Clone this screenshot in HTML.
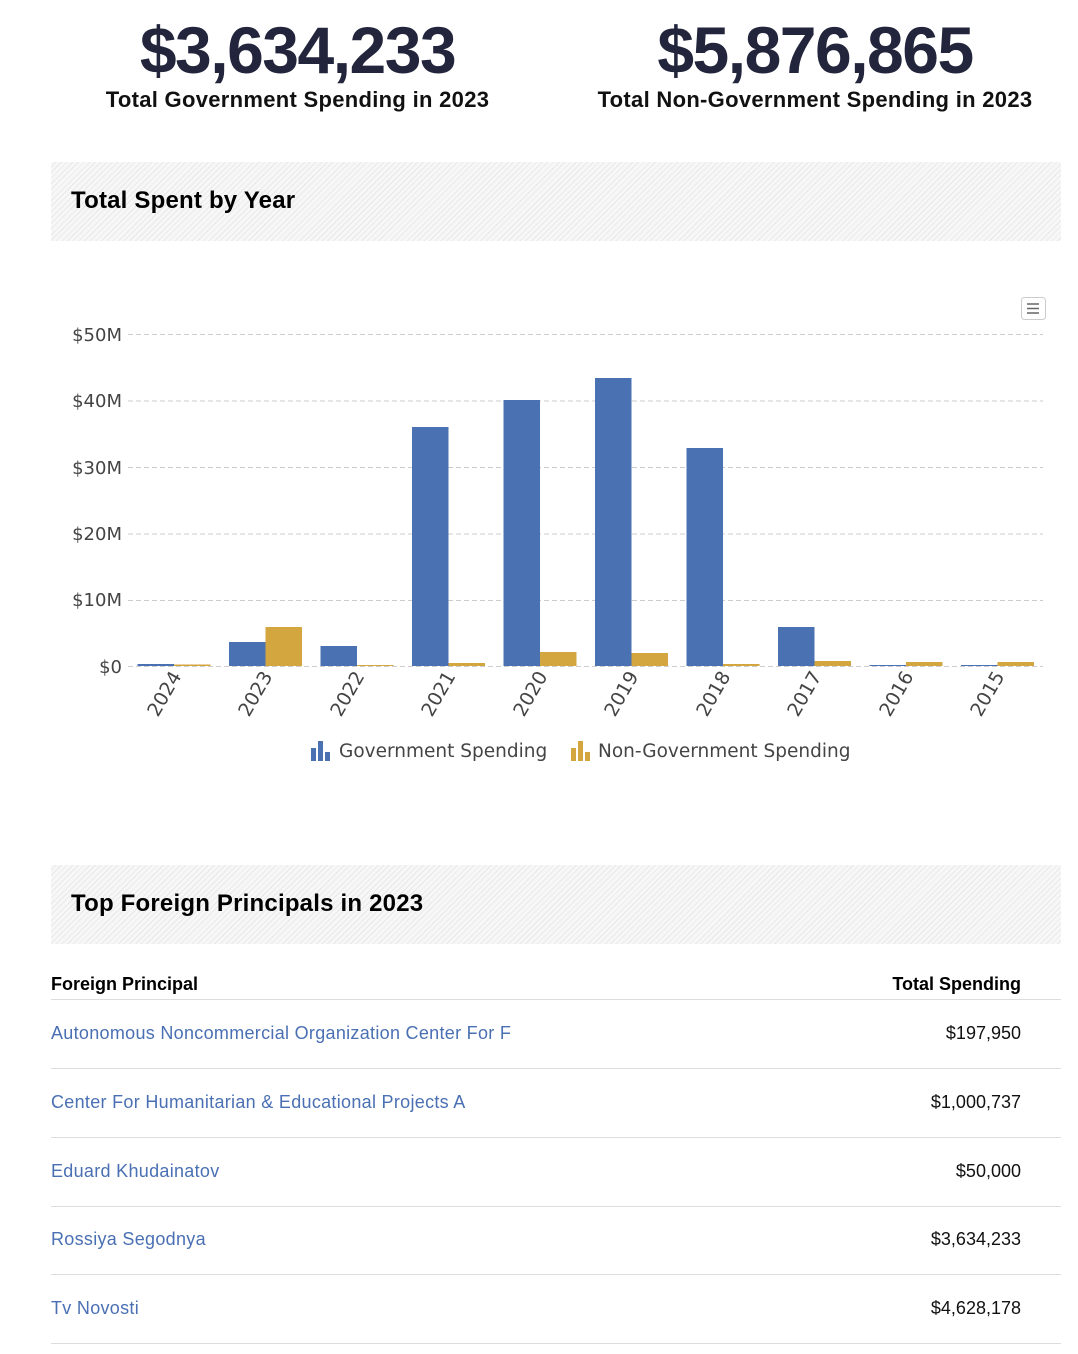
<!DOCTYPE html>
<html><head><meta charset="utf-8"><style>
body{margin:0;width:1078px;height:1354px;background:#fff;font-family:"Liberation Sans",sans-serif;position:relative;overflow:hidden}
.a{position:absolute}
.big{font-weight:bold;font-size:66px;color:#22253b;text-align:center;letter-spacing:-1.5px}
.sub{font-weight:bold;font-size:22px;color:#111;text-align:center;letter-spacing:0.3px}
.hatch{position:absolute;left:51px;width:1010px;height:79px;background:repeating-linear-gradient(135deg,#f7f7f7 0 3px,#e9e9e9 3px 4px)}
.hatch h2{margin:0;position:absolute;left:20px;top:25px;font-size:24px;font-weight:bold;color:#000;letter-spacing:0.2px}
.row{position:absolute;left:51px;width:1010px;height:68px;border-bottom:1px solid #ddd}
.row span{position:absolute;top:23px;font-size:18px}
.row .n{left:0;color:#4a70b3;letter-spacing:0.3px}
.row .v{right:40px;color:#111}
</style></head><body>
<div class="a big" style="left:50px;width:495px;top:12px">$3,634,233</div>
<div class="a sub" style="left:50px;width:495px;top:87px">Total Government Spending in 2023</div>
<div class="a big" style="left:570px;width:490px;top:12px">$5,876,865</div>
<div class="a sub" style="left:570px;width:490px;top:87px">Total Non-Government Spending in 2023</div>

<div class="hatch" style="top:162px"><h2>Total Spent by Year</h2></div>

<svg class="a" style="left:0;top:0" width="1078" height="800" font-family="DejaVu Sans, sans-serif">
<rect x="1021.5" y="297.5" width="24" height="22" rx="3" fill="#fff" stroke="#ccc"/>
<path d="M1027 304h12M1027 308.5h12M1027 313h12" stroke="#666" stroke-width="1.5"/>
<g stroke="#ccc" stroke-dasharray="5,3" stroke-width="1">
<path d="M128 334.5H1043M128 401H1043M128 467.5H1043M128 534H1043M128 600.5H1043M128 666.5H1043"/>
</g>
<g fill="#444" font-size="18" text-anchor="end">
<text x="122" y="341">$50M</text><text x="122" y="407">$40M</text><text x="122" y="474">$30M</text><text x="122" y="540">$20M</text><text x="122" y="606">$10M</text><text x="122" y="673">$0</text>
</g>
<g fill="#4a72b2">
<rect x="137.5" y="664" width="36.5" height="2"/>
<rect x="229" y="642" width="36.5" height="24"/>
<rect x="320.5" y="646" width="36.5" height="20"/>
<rect x="412" y="427" width="36.5" height="239"/>
<rect x="503.5" y="400" width="36.5" height="266"/>
<rect x="595" y="378" width="36.5" height="288"/>
<rect x="686.5" y="448" width="36.5" height="218"/>
<rect x="778" y="627" width="36.5" height="39"/>
<rect x="869.5" y="665" width="36.5" height="1"/>
<rect x="961" y="665" width="36.5" height="1"/>
</g>
<g fill="#d4a640">
<rect x="174" y="664.5" width="36.5" height="1.5"/>
<rect x="265.5" y="627" width="36.5" height="39"/>
<rect x="357" y="665" width="36.5" height="1"/>
<rect x="448.5" y="663" width="36.5" height="3"/>
<rect x="540" y="652" width="36.5" height="14"/>
<rect x="631.5" y="653" width="36.5" height="13"/>
<rect x="723" y="664" width="36.5" height="2"/>
<rect x="814.5" y="661" width="36.5" height="5"/>
<rect x="906" y="662" width="36.5" height="4"/>
<rect x="997.5" y="662" width="36.5" height="4"/>
</g>
<g fill="#444" font-size="19" text-anchor="end">
<text transform="translate(182,676) rotate(-60)">2024</text>
<text transform="translate(273,676) rotate(-60)">2023</text>
<text transform="translate(365,676) rotate(-60)">2022</text>
<text transform="translate(456,676) rotate(-60)">2021</text>
<text transform="translate(548,676) rotate(-60)">2020</text>
<text transform="translate(639,676) rotate(-60)">2019</text>
<text transform="translate(731,676) rotate(-60)">2018</text>
<text transform="translate(822,676) rotate(-60)">2017</text>
<text transform="translate(914,676) rotate(-60)">2016</text>
<text transform="translate(1005,676) rotate(-60)">2015</text>
</g>
<g fill="#4a72b2"><rect x="311" y="748" width="5" height="13"/><rect x="318" y="741" width="5" height="20"/><rect x="325" y="752" width="5" height="9"/></g>
<text x="339" y="757" font-size="18.5" fill="#444">Government Spending</text>
<g fill="#d4a640"><rect x="571" y="748" width="5" height="13"/><rect x="578" y="741" width="5" height="20"/><rect x="585" y="752" width="5" height="9"/></g>
<text x="598" y="757" font-size="18.5" fill="#444">Non-Government Spending</text>
</svg>

<div class="hatch" style="top:865px"><h2>Top Foreign Principals in 2023</h2></div>

<div class="a" style="left:51px;top:974px;font-weight:bold;font-size:18px;color:#000">Foreign Principal</div>
<div class="a" style="right:57px;top:974px;font-weight:bold;font-size:18px;color:#000">Total Spending</div>
<div class="a" style="left:51px;top:999px;width:1010px;border-top:1px solid #ddd"></div>
<div class="row" style="top:1000px"><span class="n">Autonomous Noncommercial Organization Center For F</span><span class="v">$197,950</span></div>
<div class="row" style="top:1069px"><span class="n">Center For Humanitarian &amp; Educational Projects A</span><span class="v">$1,000,737</span></div>
<div class="row" style="top:1138px"><span class="n">Eduard Khudainatov</span><span class="v">$50,000</span></div>
<div class="row" style="top:1206px"><span class="n">Rossiya Segodnya</span><span class="v">$3,634,233</span></div>
<div class="row" style="top:1275px"><span class="n">Tv Novosti</span><span class="v">$4,628,178</span></div>
</body></html>
